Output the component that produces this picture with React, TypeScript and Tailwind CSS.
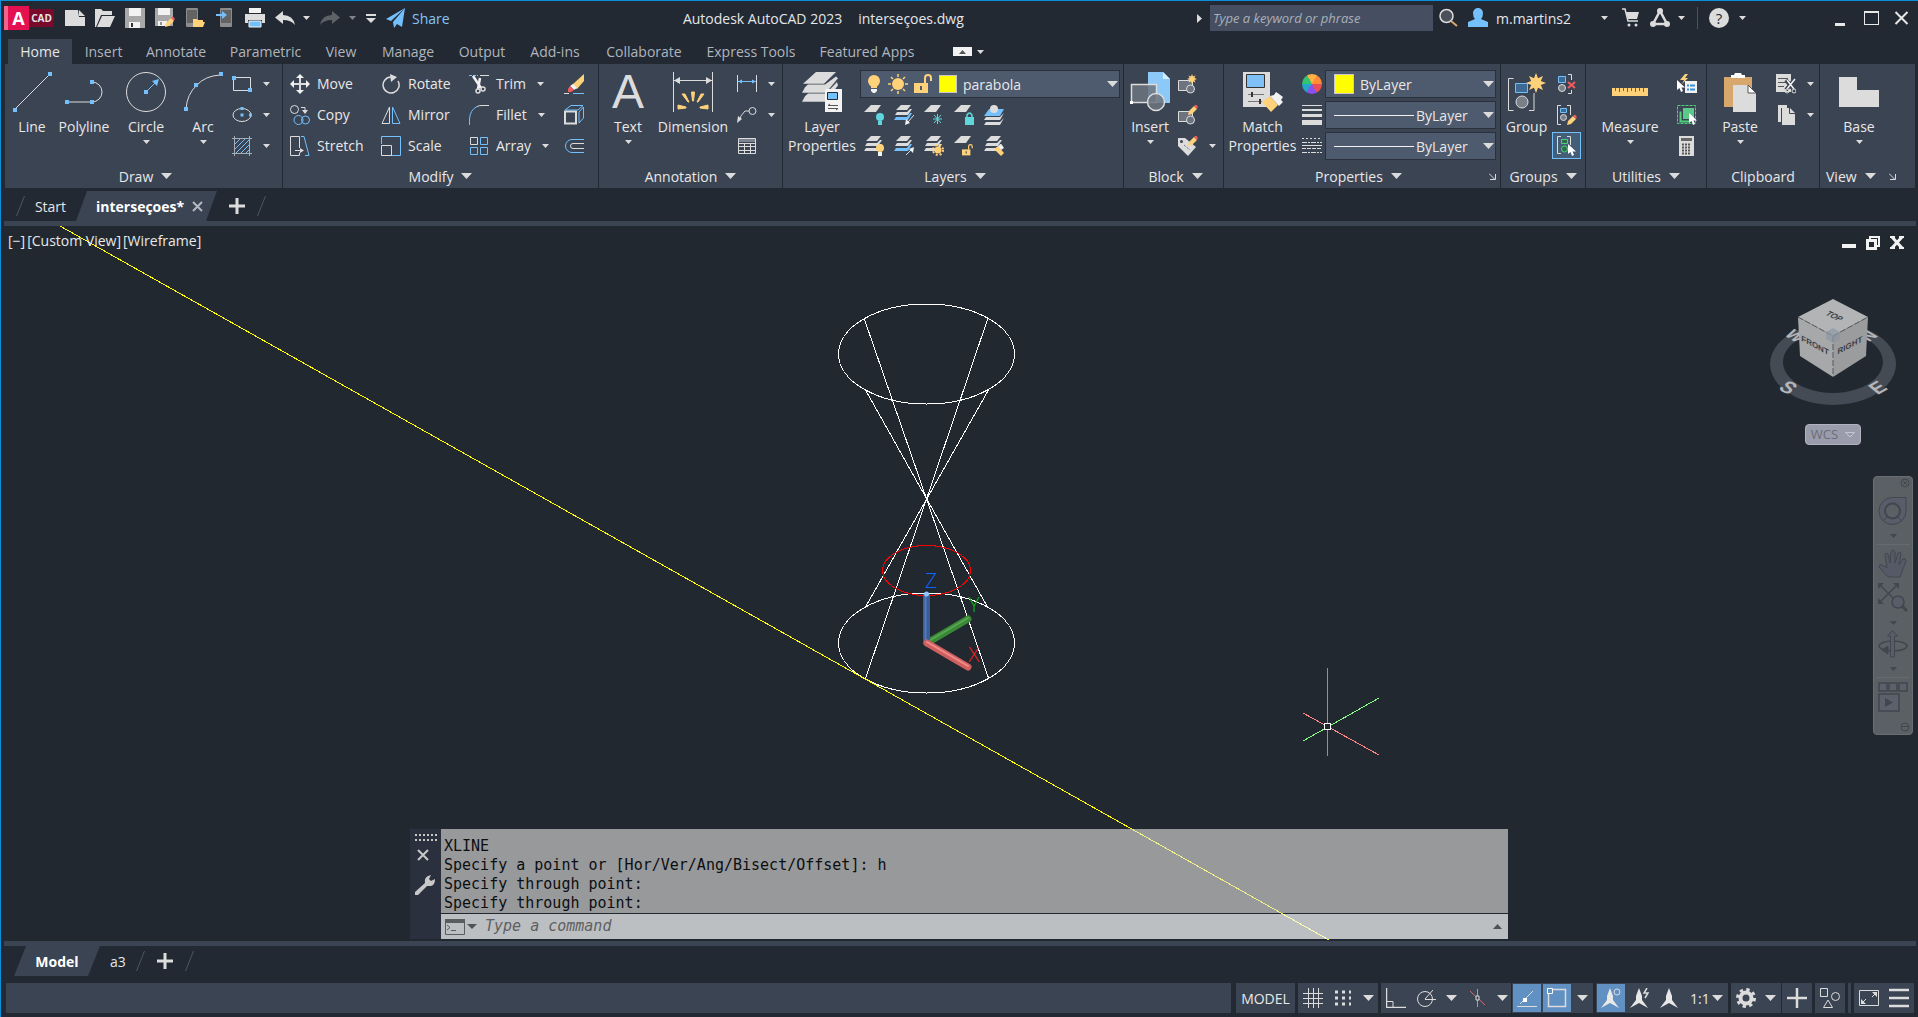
import type { ReactNode } from 'react';

const W = '#dcdcdc';
const B = '#74c0fc';
const Y = '#ffd27a';
const T = '#5fd6dc';

type IconProps = { size?: number; children: ReactNode };

function Icon({ size = 20, children }: IconProps) {
  return (
    <svg width={size} height={size} viewBox={`0 0 ${size} ${size}`} fill="none" stroke={W} className="shrink-0" aria-hidden="true">
      {children}
    </svg>
  );
}

function Caret({ big = false }: { big?: boolean }) {
  return big ? (
    <svg width="11" height="6" viewBox="0 0 11 6" className="shrink-0" aria-hidden="true"><path d="M0 0h11L5.500 6z" fill={W} /></svg>
  ) : (
    <svg width="7" height="4" viewBox="0 0 7 4" className="shrink-0" aria-hidden="true"><path d="M0 0h7L3.500 4z" fill={W} /></svg>
  );
}

function Dot({ x, y }: { x: number; y: number }) {
  return <rect x={x - 2} y={y - 2} width="4" height="4" fill={B} stroke="none" />;
}

function Launcher() {
  return <svg width="7" height="7" viewBox="0 0 7 7" fill="none" stroke={W} aria-hidden="true"><path d="M0 .5l5.500 5.500M6.500 1v5.500H1" /></svg>;
}

/* ---------- shared shapes ---------- */

function Stack({ bottom = W }: { bottom?: string }) {
  return (
    <g stroke="none">
      <path d="M7 0h10l-4 5H2z" fill={W} />
      <path d="M3 7h10l3-3h2l-4 6H1z" fill={W} />
      <path d="M2 12h11l3-4h2l-4 7H0z" fill={bottom} />
    </g>
  );
}

function Sheet() {
  return <path d="M7 0h10l-5 7H0z" fill={W} stroke="none" />;
}

function Pencil({ x = 0, y = 0 }: { x?: number; y?: number }) {
  return (
    <g transform={`translate(${x} ${y})`} stroke="none">
      <path d="M0 10l1-4 5-5 3 3-5 5z" fill={Y} />
      <path d="M6 1l1-1q1-.6 2 .4t.6 2L9 4z" fill="#f25c5c" />
    </g>
  );
}

function Bracket({ d }: { d: string }) {
  return <path d={d} stroke={W} />;
}

function Pointer({ x, y }: { x: number; y: number }) {
  return <path transform={`translate(${x} ${y})`} d="M0 0v10l2.500-2 1.500 4 2-1-1.500-3.500H8z" fill="#fff" stroke="none" />;
}

function Star({ x, y, r }: { x: number; y: number; r: number }) {
  return (
    <path
      transform={`translate(${x} ${y}) scale(${r / 10})`}
      d="M0-10l2 5.200L7-7 4.800-2 10 0 4.800 2 7 7 2 4.800 0 10-2 4.800-7 7-4.800 2-10 0-4.800-2-7-7-2-4.800z"
      fill={Y}
      stroke="none"
    />
  );
}

function OpenLock({ x = 0, y = 0, s = 1 }: { x?: number; y?: number; s?: number }) {
  return (
    <g transform={`translate(${x} ${y}) scale(${s})`}>
      <rect x="0" y="9" width="14" height="10" fill={Y} stroke="none" />
      <path d="M11 9V4q0-3 3-3t3 3v3" stroke={Y} strokeWidth="2" />
      <path d="M7 12v4" stroke="#4e5a6d" strokeWidth="2" />
    </g>
  );
}

/* ---------- ribbon building blocks ---------- */

type PanelProps = { title: string; width: string; arrow?: boolean; launcher?: boolean; children: ReactNode };

function Panel({ title, width, arrow = true, launcher, children }: PanelProps) {
  return (
    <section className={`flex flex-col border-r border-[#222933] pt-1 ${width}`}>
      <div className="flex h-24">{children}</div>
      <div className="flex h-6 items-center px-1">
        <button className="flex flex-1 items-center justify-center gap-2">
          {title}
          {arrow && <Caret big />}
        </button>
        {launcher && <button aria-label={`${title} settings`}><Launcher /></button>}
      </div>
    </section>
  );
}

type BigProps = { label: string; second?: string; width: string; arrow?: boolean; children: ReactNode };

function BigButton({ label, second, width, arrow, children }: BigProps) {
  return (
    <button className={`flex flex-col items-center justify-start pt-1 leading-[19px] ${width}`}>
      <span className="mb-[5px] flex h-10 items-center justify-center">{children}</span>
      {label}
      {second && <span>{second}</span>}
      {arrow && <span className="mt-1 flex"><Caret /></span>}
    </button>
  );
}

function SmallButton({ label, text, arrow, children }: { label: string; text?: boolean; arrow?: boolean; children: ReactNode }) {
  return (
    <button className="flex h-[31px] items-center gap-[7px]" aria-label={label}>
      {children}
      {text && <span>{label}</span>}
      {arrow && <span className="ml-1"><Caret /></span>}
    </button>
  );
}

/* ---------- title bar ---------- */

function TitleBar() {
  return (
    <header className="flex h-[38px] items-center justify-between pb-1 text-[#e4e6e8]">
      <div className="flex items-center">
        <button className="ml-[3px] flex items-center" aria-label="Application menu">
          <span className="flex h-6 w-[25px] items-center justify-center bg-[#e51050] pl-1 text-lg font-bold text-white [box-shadow:inset_4px_0_#f0648a]">A</span>
          <span className="flex h-[18px] w-[25px] items-center justify-center bg-[#7a0a2c] text-[10px] font-bold">CAD</span>
        </button>
        <div className="ml-[11px] flex items-center gap-[10px]">
          <button aria-label="New"><Icon><path d="M0 2h13l1 7h6v9H0z" fill={W} stroke="none" /><path d="M14 2l6 6h-6z" fill={W} stroke="none" /></Icon></button>
          <button aria-label="Open"><Icon><path d="M0 1h6l2 2h9v4H6L1 19H0z" fill={W} stroke="none" /><path d="M7 8h13l-5 11H2z" fill={W} stroke="none" /></Icon></button>
          <button aria-label="Save">
            <Icon><path d="M0 0h20v20H0z" fill="#a8a8a8" stroke="none" /><path d="M4 0h12v8H4zM4 14h11v6H4z" fill="#f2f2f2" stroke="none" /><path d="M7 15v4" stroke="#333" strokeWidth="2" /></Icon>
          </button>
          <button aria-label="Save as">
            <Icon><path d="M0 0h18v18H0z" fill="#a8a8a8" stroke="none" /><path d="M3 0h12v7H3zM3 13h9v5H3z" fill="#f2f2f2" stroke="none" /><path d="M6 14v3" stroke="#333" /><Pencil x={10} y={9} /></Icon>
          </button>
          <button aria-label="Open from web and mobile">
            <Icon><rect x="1" width="12" height="19" rx="1" fill="#8c8c8c" stroke="none" /><path d="M2 2h10v13H2z" fill="#636363" stroke="none" /><path d="M8 11h4l1 1h5v2h2l-2 5H8z" fill={Y} stroke="none" /></Icon>
          </button>
          <button aria-label="Save to web and mobile">
            <Icon><rect x="5" width="12" height="19" rx="1" fill="#8c8c8c" stroke="none" /><path d="M6 2h10v13H6z" fill="#636363" stroke="none" /><path d="M1 6h6V3l5 4-5 4V8H1z" fill={B} stroke="none" /></Icon>
          </button>
          <button aria-label="Plot">
            <Icon><path d="M4 0h12v5H4z" fill="#f2f2f2" stroke="none" /><path d="M0 6h20v9h-3v-3H3v3H0z" fill={W} stroke="none" /><path d="M4 13h12v6H4z" fill={B} stroke="#f2f2f2" /></Icon>
          </button>
          <button className="flex items-center gap-2" aria-label="Undo">
            <Icon><path d="M8 3v4q10 0 12 10-4-5-12-5v4L0 9.500z" fill={W} stroke="none" /></Icon><Caret />
          </button>
          <button className="flex items-center gap-[9px] opacity-50" aria-label="Redo">
            <Icon><path d="M12 3v4Q2 7 0 17q4-5 12-5v4l8-6.500z" fill="#9a9a9a" stroke="none" /></Icon><Caret />
          </button>
          <button className="flex flex-col items-center gap-[2px]" aria-label="Customize toolbar">
            <span className="h-[2px] w-[10px] bg-[#dcdcdc]" /><svg width="10" height="5" viewBox="0 0 10 5" aria-hidden="true"><path d="M0 0h10L5 5z" fill={W} /></svg>
          </button>
          <button className="flex items-center gap-[6px] text-[#86c4f4]">
            <Icon><path d="M19 0L0 11l5 2zM19 0L7 14l1 6 3-4 5 3z" fill={B} stroke="none" /></Icon>Share
          </button>
        </div>
      </div>
      <h1 className="flex gap-4"><span>Autodesk AutoCAD 2023</span><span>interseçoes.dwg</span></h1>
      <div className="flex items-center">
        <button aria-label="Collapse search"><svg width="5" height="9" viewBox="0 0 5 9" aria-hidden="true"><path d="M0 0v9l5-4.500z" fill={W} /></svg></button>
        <input aria-label="Search help" placeholder="Type a keyword or phrase" className="ml-2 h-[26px] w-[223px] bg-[#464f61] px-[3px] text-[13px] italic placeholder:text-[#a9afba]" />
        <button className="ml-[6px]" aria-label="Search"><Icon><circle cx="7.500" cy="8" r="6.500" fill="#4b515a" strokeWidth="1.500" /><path d="M12 13l6 5" stroke="#d8a76b" strokeWidth="2" /></Icon></button>
        <button className="ml-[9px] flex items-center gap-2">
          <Icon><path d="M5 5a5 5 0 0 1 10 0q0 4-2 6l7 3v5H0v-5l7-3Q5 9 5 5z" fill={B} stroke="none" /></Icon>
          <span className="w-[97px] text-left">m.martins2</span>
          <Caret />
        </button>
        <button className="ml-[14px]" aria-label="App store"><Icon><path d="M0 1h3l3 12h10" strokeWidth="1.500" /><path d="M4 4h13l-2 7H6z" fill={W} stroke="none" /><circle cx="7" cy="17" r="1.500" fill={W} stroke="none" /><circle cx="14" cy="17" r="1.500" fill={W} stroke="none" /></Icon></button>
        <button className="ml-2 flex items-center gap-2" aria-label="Autodesk app">
          <Icon><path d="M10 3L3 16h14z" strokeWidth="2.500" /><circle cx="10" cy="3" r="3" fill={W} stroke="none" /><circle cx="3" cy="16" r="3" fill={W} stroke="none" /><circle cx="17" cy="16" r="3" fill={W} stroke="none" /></Icon><Caret />
        </button>
        <span className="ml-3 h-[22px] w-px bg-[#4a5261]" />
        <button className="ml-[11px] flex items-center gap-[10px]" aria-label="Help">
          <span className="flex h-5 w-5 items-center justify-center rounded-full bg-[#dcdcdc] text-[15px] text-[#222933]">?</span><Caret />
        </button>
        <div className="ml-[89px] flex items-center gap-[15px] pr-[9px]">
          <button className="flex h-4 w-[14px] items-end" aria-label="Minimize"><span className="h-[3px] w-[10px] bg-[#e8e8e8]" /></button>
          <button className="h-[14px] w-[15px] border border-[#e8e8e8] border-t-2" aria-label="Maximize" />
          <button aria-label="Close"><svg width="15" height="14" viewBox="0 0 15 14" stroke="#e8e8e8" strokeWidth="2" aria-hidden="true"><path d="M1.500 1l12 12M13.500 1l-12 12" /></svg></button>
        </div>
      </div>
    </header>
  );
}

const ribbonTabs = [
  { name: 'Insert', width: 'w-[61px]' },
  { name: 'Annotate', width: 'w-[84px]' },
  { name: 'Parametric', width: 'w-[95px]' },
  { name: 'View', width: 'w-[56px]' },
  { name: 'Manage', width: 'w-[78px]' },
  { name: 'Output', width: 'w-[70px]' },
  { name: 'Add-ins', width: 'w-[76px]' },
  { name: 'Collaborate', width: 'w-[102px]' },
  { name: 'Express Tools', width: 'w-[112px]' },
  { name: 'Featured Apps', width: 'w-[120px]' },
];

function RibbonTabs() {
  return (
    <nav className="flex h-[25px] items-center pl-[7px] text-[#b0b5bd]">
      <button className="mr-px h-full w-16 bg-[#3b4453] text-[#e4e6e8]">Home</button>
      {ribbonTabs.map((tab) => (
        <button key={tab.name} className={tab.width}>{tab.name}</button>
      ))}
      <button className="ml-[26px] flex items-center gap-[5px]" aria-label="Minimize ribbon">
        <span className="flex h-[9px] w-[19px] items-center justify-center bg-[#f2f2f2]">
          <svg width="7" height="4" viewBox="0 0 7 4" aria-hidden="true"><path d="M0 4h7L3.500 0z" fill="#555" /></svg>
        </span>
        <Caret />
      </button>
    </nav>
  );
}

/* ---------- ribbon panels ---------- */

function DrawPanel() {
  return (
    <Panel title="Draw" width="w-[278px] pl-1">
      <BigButton label="Line" width="w-[46px]">
        <Icon size={40}><path d="M3 37L37 3" /><Dot x={3} y={38} /><Dot x={38} y={2} /></Icon>
      </BigButton>
      <BigButton label="Polyline" width="w-[58px]">
        <Icon size={40}><path d="M2 30h26a10 10 0 0 0 0-20" /><Dot x={3} y={30} /><Dot x={28} y={30} /><Dot x={28} y={10} /></Icon>
      </BigButton>
      <BigButton label="Circle" width="w-[66px]" arrow>
        <Icon size={40}><circle cx="20" cy="20" r="19.500" /><path d="M20 20l9-9" stroke={B} /><path d="M33 7l-2 7-5-5z" fill={B} stroke="none" /><Dot x={20} y={20} /></Icon>
      </BigButton>
      <BigButton label="Arc" width="w-[48px]" arrow>
        <Icon size={40}><path d="M3 37Q4 22 14 13 22 4 37 3" /><Dot x={3} y={37} /><Dot x={13} y={13} /><Dot x={38} y={2} /></Icon>
      </BigButton>
      <div className="ml-[5px] flex flex-col">
        <SmallButton label="Rectangle" arrow><Icon><path d="M1.500 3.500h17v13h-17z" /><Dot x={2} y={4} /><Dot x={18} y={16} /></Icon></SmallButton>
        <SmallButton label="Ellipse" arrow><Icon><ellipse cx="10" cy="10" rx="9" ry="6.500" /><rect x="8.500" y="2" width="3" height="3" fill={B} stroke="none" /><rect x="8.500" y="8.500" width="3" height="3" fill={B} stroke="none" /><rect x="17" y="8.500" width="3" height="3" fill={B} stroke="none" /></Icon></SmallButton>
        <SmallButton label="Hatch" arrow>
          <Icon><path d="M0 2.500h20M0 17.500h20M2.500 0v20M17.500 0v20" stroke="#a8adb5" /><path d="M3 8l5-5M3 13L13 3M4 17L17 4M9 17l8-8M14 17l3-3" stroke={B} /></Icon>
        </SmallButton>
      </div>
    </Panel>
  );
}

function ModifyPanel() {
  return (
    <Panel title="Modify" width="w-[316px]">
      <div className="ml-[7px] flex w-[91px] flex-col">
        <SmallButton label="Move" text><Icon><path d="M10 1v18M1 10h18" strokeWidth="2" /><path d="M10 0l4 4H6zM10 20l4-4H6zM0 10l4-4v8zM20 10l-4-4v8z" fill="#f2f2f2" stroke="none" /></Icon></SmallButton>
        <SmallButton label="Copy" text><Icon><circle cx="4.500" cy="4.500" r="4" /><circle cx="8.500" cy="15" r="4.500" stroke={B} /><circle cx="15.500" cy="15" r="4" stroke={B} /><path d="M11 2.500h4V6" /><path d="M12 5h6l-3 4z" fill={W} stroke="none" /></Icon></SmallButton>
        <SmallButton label="Stretch" text><Icon><path d="M9.500 12V.5h-9v19h9v-3" /><path d="M11 .5h3l5 19h-4" stroke={B} /><path d="M5 14.500h6" /><path d="M10 12l4 2.500-4 2.500z" fill={W} stroke="none" /></Icon></SmallButton>
      </div>
      <div className="flex w-[88px] flex-col">
        <SmallButton label="Rotate" text><Icon><path d="M10 3a8 8 0 1 0 7 4" strokeWidth="1.500" /><path d="M9 0l7 3-6 5z" fill={W} stroke="none" /></Icon></SmallButton>
        <SmallButton label="Mirror" text><Icon><path d="M8.500 2v16.500H1z" /><path d="M11.500 2v16.500H19z" stroke={B} /></Icon></SmallButton>
        <SmallButton label="Scale" text><Icon><path d="M.5 8V.5h19v19H10" stroke={B} /><path d="M.5 9.500h10v10H.5z" /></Icon></SmallButton>
      </div>
      <div className="flex w-[95px] flex-col">
        <SmallButton label="Trim" text arrow><Icon><path d="M0 1.500h9" stroke={B} strokeDasharray="3 1" /><path d="M11 1.500h9" /><path d="M4 2l8 12M11 4l-2 11" strokeWidth="2.500" stroke="#f2f2f2" /><circle cx="9" cy="17" r="2" strokeWidth="1.500" /><circle cx="14" cy="15" r="2" strokeWidth="1.500" /></Icon></SmallButton>
        <SmallButton label="Fillet" text arrow><Icon><path d="M.5 20v-6Q1 5 8 1.500" stroke={B} /><path d="M8 1.500Q10 .5 13 .5h7" /></Icon></SmallButton>
        <SmallButton label="Array" text arrow><Icon><path d="M1.500 1.500h7v7h-7z" /><path d="M11.500 1.500h7v7h-7zM1.500 11.500h7v7h-7zM11.500 11.500h7v7h-7z" stroke={B} /></Icon></SmallButton>
      </div>
      <div className="flex flex-col">
        <SmallButton label="Erase"><Icon><path d="M20 0v7l-7 8-5-4z" fill={Y} stroke="none" /><path d="M9 10l4 4-3 2-4-4z" fill="#f2f2f2" stroke="none" /><path d="M6 12l4 4-3 2H4v-3z" fill="#f25c5c" stroke="none" /><path d="M0 19.500h5" /><path d="M9 19.500h11" stroke={B} /></Icon></SmallButton>
        <SmallButton label="Explode"><Icon><path d="M1 6.500h11v12H1z" strokeWidth="2" /><path d="M1 5l6-4.500h12L14 5zM15 7l4.500-5v11L15 18z" stroke={B} /></Icon></SmallButton>
        <SmallButton label="Offset"><Icon><path d="M20 3.500H8a6.500 6.500 0 0 0 0 13h12" stroke={B} /><path d="M20 7.500H9a2.500 2.500 0 0 0 0 5h11" /></Icon></SmallButton>
      </div>
    </Panel>
  );
}

function AnnotationPanel() {
  return (
    <Panel title="Annotation" width="w-[184px]">
      <div className="ml-1 flex">
        <BigButton label="Text" width="w-[50px]" arrow><span className="font-['Liberation_Sans',sans-serif] text-5xl leading-10 text-[#dcdcdc]">A</span></BigButton>
      </div>
      <BigButton label="Dimension" width="w-[80px]">
        <Icon size={40}>
          <path d="M.5 0v40M39.500 0v40M1 8.500h38" />
          <path d="M1 8.500l6-3.500v7zM39 8.500L33 5v7z" fill={W} stroke="none" />
          <path d="M18.500 20h3l-1 9h-1zM9 22l3 0 4 8-1 0zM31 22l-3 0-4 8 1 0zM5 33l8 2v1l-8 1zM35 33l-8 2v1l8 1z" fill={Y} stroke={Y} />
        </Icon>
      </BigButton>
      <div className="ml-1 flex flex-col">
        <SmallButton label="Linear" arrow><Icon><path d="M.5 1v17M19.500 1v17" /><path d="M1 7.500h18" stroke={B} /><path d="M1 7.500l4-2v4zM19 7.500l-4-2v4z" fill={B} stroke="none" /></Icon></SmallButton>
        <SmallButton label="Leader" arrow><Icon><circle cx="15.500" cy="6" r="3.500" /><path d="M12 6H8q-4 4-6 9" /><path d="M0 18l1-7 4 3z" fill={W} stroke="none" /></Icon></SmallButton>
        <SmallButton label="Table"><Icon><path d="M1.500 2.500h17v15h-17zM1 7.500h18M1 10.500h18M1 14.500h18M7.500 7v10M13.500 7v10" /><path d="M2 3h16v3H2z" fill="#7c838e" stroke="none" /></Icon></SmallButton>
      </div>
    </Panel>
  );
}

const comboBox = 'flex h-7 items-center border border-[#2a313d] bg-[#4e5a6d]';

function LayersPanel() {
  return (
    <Panel title="Layers" width="w-[341px] pl-1">
      <BigButton label="Layer" second="Properties" width="w-[70px]">
        <Icon size={40}>
          <path d="M14 0h20L22 13H1zM3 17l3-3h17L34 5l2 2-12 16H0zM3 27l3-3h18L35 11l1 4-13 18H0z" transform="scale(1 .9)" fill={W} stroke="none" />
          <path d="M23 17h17v23H23z" fill="#f2f2f2" stroke="none" />
          <path d="M25.500 20.500h10v7h-10z" fill={B} stroke="#222933" />
          <path d="M26 33.500h10M26 36.500h10M28 32l-2 1.500M34 38l2-1.500" stroke="#555" />
        </Icon>
      </BigButton>
      <div className="ml-[3px] flex flex-col">
        <div className={`mt-[2px] mb-px w-[260px] gap-1 pr-px pl-[3px] ${comboBox}`}>
          <Icon><circle cx="10" cy="7" r="6" fill={Y} stroke="none" /><path d="M7 11h6v3H7z" fill={Y} stroke="none" /><path d="M7 15h6v2l-2 2H9l-2-2z" fill="#f2f2f2" stroke="none" /></Icon>
          <Icon><circle cx="10" cy="10" r="6" fill={Y} stroke="none" /><path d="M10 0v3M10 17v3M0 10h3M17 10h3M3 3l2 2M15 15l2 2M17 3l-2 2M5 15l-2 2" stroke={Y} strokeWidth="1.500" /></Icon>
          <Icon><OpenLock x={2} /></Icon>
          <span className="ml-[3px] h-[18px] w-[18px] shrink-0 border border-[#c8c8c8] bg-[#ffff00]" />
          <select aria-label="Current layer" className="ml-[2px] flex-1 appearance-none bg-transparent"><option>parabola</option></select>
          <Caret big />
        </div>
        <div className="grid grid-cols-[repeat(5,30px)] pl-1">
          <SmallButton label="Off"><Icon><Sheet /><circle cx="16" cy="12" r="4" fill={T} stroke="none" /><path d="M14 16h4v4h-4z" fill={T} stroke="none" /></Icon></SmallButton>
          <SmallButton label="Isolate"><Icon><Stack bottom={B} /><path d="M20 10l-6 7" /><path d="M11 20l1-6 4 4z" fill="#f2f2f2" stroke="none" /></Icon></SmallButton>
          <SmallButton label="Freeze"><Icon><Sheet /><path d="M13.500 9v10M9 14h9M10 10l7 8M17 10l-7 8" stroke={T} /></Icon></SmallButton>
          <SmallButton label="Lock"><Icon><Sheet /><path d="M11 12h9v8h-9z" fill={T} stroke="none" /><path d="M13 12v-2q2.500-4 5 0v2" stroke={T} strokeWidth="1.500" /></Icon></SmallButton>
          <SmallButton label="Make current"><Icon><path d="M5 4h15l-4 7H0z" fill={B} stroke="none" /><circle cx="10" cy="4" r="4" fill={W} stroke="none" /><path d="M2 12h14l4-4-4 7H0zM2 17h14l4-4-4 7H0z" fill={W} stroke="none" /></Icon></SmallButton>
          <SmallButton label="Turn all on"><Icon><Stack /><circle cx="16" cy="12" r="4" fill={Y} stroke="none" /><path d="M14 16h4v4h-4z" fill="#f2f2f2" stroke="none" /></Icon></SmallButton>
          <SmallButton label="Unisolate"><Icon><Stack bottom={B} /><path d="M12 19l6-6" /><path d="M20 11l-1 6-4-4z" fill="#f2f2f2" stroke="none" /></Icon></SmallButton>
          <SmallButton label="Thaw"><Icon><Stack /><circle cx="14" cy="14" r="3.500" fill={Y} stroke="none" /><circle cx="14" cy="14" r="5" stroke={Y} strokeWidth="2" strokeDasharray="2 2" /></Icon></SmallButton>
          <SmallButton label="Unlock"><Icon><Sheet /><OpenLock x={8} y={8} s={0.6} /></Icon></SmallButton>
          <SmallButton label="Match layer"><Icon><Stack /><path d="M10 13l4-3 6 7-3 3z" fill={Y} stroke="none" /><path d="M14 10l4-1 2 3-3 2z" fill="#f2f2f2" stroke="none" /></Icon></SmallButton>
        </div>
      </div>
    </Panel>
  );
}

function BlockGlyph() {
  return (
    <>
      <path d="M.5 6.500h14v10H.5z" fill="#6d7480" />
      <circle cx="12.500" cy="15" r="4" fill="#6d7480" />
    </>
  );
}

function BlockPanel() {
  return (
    <Panel title="Block" width="w-[100px] pl-1">
      <BigButton label="Insert" width="w-[44px]" arrow>
        <Icon size={40}>
          <path d="M18 0h15l7 7v24H18z" fill="#8cc8f8" stroke="none" /><path d="M33 0l7 7h-7z" fill="#d6ecfd" stroke="none" />
          <path d="M1.500 12.500h25v18h-25z" fill="#6d7480" fillOpacity=".85" strokeWidth="1.500" /><circle cx="26" cy="30" r="8.500" fill="#6d7480" fillOpacity=".85" strokeWidth="1.500" />
          <path d="M0 29h3v3H0z" fill="#fff" stroke="none" />
        </Icon>
      </BigButton>
      <div className="ml-[6px] flex flex-col">
        <SmallButton label="Create block"><Icon><BlockGlyph /><Star x={14} y={5} r={5} /></Icon></SmallButton>
        <SmallButton label="Edit block"><Icon><BlockGlyph /><Pencil x={10} y={0} /></Icon></SmallButton>
        <SmallButton label="Edit attributes" arrow><Icon><path d="M0 2h7l11 9-8 9L0 10z" fill={W} stroke="none" /><path d="M6 9l6 5" stroke="#555" strokeDasharray="1 1" /><circle cx="3.500" cy="5.500" r="1.500" fill="#3b4453" stroke="none" /><Pencil x={10} y={0} /></Icon></SmallButton>
      </div>
    </Panel>
  );
}

function PropertiesPanel() {
  return (
    <Panel title="Properties" width="w-[277px]" launcher>
      <BigButton label="Match" second="Properties" width="w-[77px]">
        <Icon size={40}>
          <path d="M0 0h27v35H0z" fill={W} stroke="none" />
          <path d="M3.500 2.500h18v13h-18z" fill="#7fc1f7" stroke="#333" />
          <path d="M5 22.500h16M5 29.500h14" stroke="#777" /><path d="M9 20v5M17 27v5" stroke="#333" strokeWidth="2" />
          <path d="M19 30l8-6 8 9-7 7z" fill={Y} stroke="none" /><path d="M27 24l4-1 2-3 3 2 4 3-2 3 2 2-4 4z" fill="#f2f2f2" stroke="none" />
        </Icon>
      </BigButton>
      <div className="ml-px flex w-[23px] flex-col">
        <SmallButton label="Color"><span className="h-5 w-5 rounded-full bg-[conic-gradient(#ffb144_0_8%,#ff8d38_0_25%,#e94e58_0_42%,#8a50f0_0_60%,#22a7c8_0_75%,#34c470_0_92%,#ffb144_0)]" /></SmallButton>
        <SmallButton label="Lineweight"><Icon><path d="M0 .5h20" /><path d="M0 5h20" strokeWidth="2" /><path d="M0 10.500h20" strokeWidth="3" /><path d="M0 17.500h20" strokeWidth="5" /></Icon></SmallButton>
        <SmallButton label="Linetype"><Icon><path d="M0 2.500h20" strokeDasharray="2 2" /><path d="M0 6.500h20M0 16.500h20" strokeDasharray="5 1 2 1" /><path d="M0 9.500h20" /><path d="M0 12.500h20" strokeDasharray="4 1" /></Icon></SmallButton>
      </div>
      <div className="flex flex-col gap-[3px] pt-[2px]">
        <div className={`w-[171px] pr-px pl-2 ${comboBox}`}>
          <span className="h-5 w-5 shrink-0 border border-[#c8c8c8] bg-[#ffff00]" />
          <select aria-label="Object color" className="ml-[6px] min-w-0 flex-1 appearance-none bg-transparent"><option>ByLayer</option></select>
          <Caret big />
        </div>
        {['Object lineweight', 'Object linetype'].map((name) => (
          <div key={name} className={`w-[171px] pr-px pl-2 ${comboBox}`}>
            <span className="h-px w-20 shrink-0 bg-[#f2f2f2]" />
            <select aria-label={name} className="ml-[2px] min-w-0 flex-1 appearance-none bg-transparent"><option>ByLayer</option></select>
            <Caret big />
          </div>
        ))}
      </div>
    </Panel>
  );
}

function GroupsPanel() {
  return (
    <Panel title="Groups" width="w-[85px]">
      <BigButton label="Group" width="w-[51px]">
        <Icon size={40}>
          <Bracket d="M6.500 6.500h-5v32h5M22 38.500h5V21" /><path d="M8.500 11.500h12v9h-12z" fill="#3d6a94" stroke={B} />
          <circle cx="15" cy="30" r="6" fill="#7a808a" /><Star x={29} y={11} r={10} />
        </Icon>
      </BigButton>
      <div className="flex flex-col items-center">
        <SmallButton label="Ungroup"><Icon><path d="M1.500 2.500h7v6h-7z" fill="#3d6a94" stroke={B} /><circle cx="5" cy="14" r="3.500" fill="#7a808a" /><path d="M11 .5h3.500V6M14.500 16v3.500H11" /><path d="M11 8l7 6M18 8l-7 6" stroke="#f25c5c" strokeWidth="2" /></Icon></SmallButton>
        <SmallButton label="Group edit"><Icon><Bracket d="M4 .5H.5v19H4M10 .5h3.500V10" /><path d="M3.500 3.500h6v4h-6z" fill="#3d6a94" stroke={B} /><circle cx="6.500" cy="12.500" r="3" fill="#7a808a" /><Pencil x={10} y={10} /></Icon></SmallButton>
        <button aria-label="Group selection" aria-pressed="true" className="mt-[2px] flex h-[27px] w-[29px] items-center justify-center border border-[#74c0fc] bg-[#455e78]">
          <Icon><Bracket d="M4 .5H.5v17H4M10 .5h3.500V9" /><path d="M4.500 3.500h6v4h-6z" stroke="#4fd07a" fill="#2f6b4d" /><circle cx="7.500" cy="13" r="3" stroke="#4fd07a" fill="#2f6b4d" /><Pointer x={11} y={8} /></Icon>
        </button>
      </div>
    </Panel>
  );
}

function UtilitiesPanel() {
  return (
    <Panel title="Utilities" width="w-[121px]">
      <BigButton label="Measure" width="w-[88px]" arrow>
        <Icon size={40}><path d="M2 16h36v8H2z" fill={Y} stroke="none" /><path d="M5.500 16v3M9.500 16v4M13.500 16v3M17.500 16v4M21.500 16v3M25.500 16v4M29.500 16v3M33.500 16v4" stroke="#7a6335" /></Icon>
      </BigButton>
      <div className="ml-[3px] flex flex-col">
        <SmallButton label="Quick select"><Icon><path d="M8 7h12v12H8z" fill="#f2f2f2" stroke="none" /><path d="M10 11.500h2M10 15.500h2M13 11.500h5M13 15.500h5" stroke="#3a8fd6" strokeWidth="2" /><path d="M8 0L3 6h4L5 10l6-6H8l3-4z" fill={Y} stroke="none" /><Pointer x={0} y={6} /></Icon></SmallButton>
        <SmallButton label="Select all"><Icon><path d="M.5.5h18v18H.5z" stroke="#4fd07a" strokeDasharray="3 1" /><path d="M6 3h11v11H6z" fill="#5cc98a" stroke="none" /><path d="M3.500 6.500v10h9" stroke="#4fd07a" strokeWidth="2" /><Pointer x={12} y={8} /></Icon></SmallButton>
        <SmallButton label="Quick calculator"><Icon><path d="M2 0h15v20H2z" fill={W} stroke="none" /><path d="M4 2h11v3H4z" fill="#666" stroke="none" /><path d="M5 8.500h9M5 11.500h9M5 14.500h9M5 17.500h9" stroke="#555" strokeWidth="2" strokeDasharray="2 1" /></Icon></SmallButton>
      </div>
    </Panel>
  );
}

function ClipboardPanel() {
  return (
    <Panel title="Clipboard" width="w-[113px]" arrow={false}>
      <BigButton label="Paste" width="w-[66px]" arrow>
        <Icon size={40}>
          <path d="M4 5h28v30H4z" fill="#d8a76b" stroke="none" /><path d="M11 6V3h3l1-2h6l1 2h3v3z" fill="#fff" stroke="none" />
          <path d="M13 13h15l8 8v19H13z" fill={W} stroke="none" /><path d="M28 13v8h8z" fill="#fff" stroke="#555" />
        </Icon>
      </BigButton>
      <div className="ml-[3px] flex flex-col">
        <SmallButton label="Cut" arrow><Icon><path d="M0 0h15v18H0z" fill={W} stroke="none" /><path d="M2 4.500h10M2 8.500h8M2 12.500h6" stroke="#555" /><path d="M18 6L10 16M10 6l8 10" stroke="#3b4453" strokeWidth="4" /><path d="M19 5l-8 10M11 6l7 9" stroke="#f2f2f2" strokeWidth="1.500" /><circle cx="11" cy="17" r="2" /><circle cx="18" cy="17" r="2" /></Icon></SmallButton>
        <SmallButton label="Copy clip" arrow><Icon><path d="M2 0h9v3H5v14H2z" fill={W} stroke="none" /><path d="M6 3h8l5 5v12H6z" fill={W} stroke="none" /><path d="M13.500 3v5.500H19" stroke="#3b4453" /></Icon></SmallButton>
      </div>
    </Panel>
  );
}

function Ribbon() {
  return (
    <div className="mr-[3px] ml-1 flex h-[124px] bg-[#3b4453] text-[#e8e8e8]">
      <DrawPanel />
      <ModifyPanel />
      <AnnotationPanel />
      <LayersPanel />
      <BlockPanel />
      <PropertiesPanel />
      <GroupsPanel />
      <UtilitiesPanel />
      <ClipboardPanel />
      <section className="flex flex-1 flex-col pt-1">
        <div className="flex h-24">
          <BigButton label="Base" width="w-[78px]" arrow>
            <Icon size={40}><path d="M0 5h18v13h22v17H0z" fill={W} stroke="none" /></Icon>
          </BigButton>
        </div>
        <div className="flex h-6 items-center gap-[13px] pl-[6px]">
          <button className="flex items-center gap-2">View<Caret big /></button>
          <button aria-label="View settings"><Launcher /></button>
        </div>
      </section>
    </div>
  );
}

/* ---------- file and layout tabs ---------- */

function Slash() {
  return <svg width="9" height="20" viewBox="0 0 9 20" stroke="#4c5565" aria-hidden="true"><path d="M8.500 0L.5 20" /></svg>;
}

function PlusIcon() {
  return <svg width="16" height="16" viewBox="0 0 16 16" stroke={W} strokeWidth="3" aria-hidden="true"><path d="M8 0v16M0 8h16" /></svg>;
}

function FileTabs() {
  return (
    <nav className="flex h-[33px] items-end pl-[15px] text-[#e4e6e8]">
      <div className="flex h-[30px] items-center">
        <Slash />
        <button className="w-[51px] text-center">Start</button>
        <div className="flex h-[30px] w-[141px] items-center bg-[#3b4453] pl-5 font-bold [clip-path:polygon(11px_0,100%_0,130px_100%,0_100%)]">
          <button className="w-24 text-left text-white">interseçoes*</button>
          <button aria-label="Close drawing"><svg width="11" height="11" viewBox="0 0 11 11" stroke="#b4b9c1" strokeWidth="2" aria-hidden="true"><path d="M1 1l9 9M10 1l-9 9" /></svg></button>
        </div>
        <button className="mx-3" aria-label="New drawing"><PlusIcon /></button>
        <Slash />
      </div>
    </nav>
  );
}

function LayoutTabs() {
  return (
    <nav className="flex h-[37px] items-start pl-[13px] text-[#e4e6e8]">
      <div className="flex h-[30px] items-center">
        <button className="h-[30px] w-[86px] bg-[#3b4453] font-bold text-white [clip-path:polygon(12px_0,100%_0,74px_100%,0_100%)]">Model</button>
        <button className="w-9">a3</button>
        <Slash />
        <button className="mx-3" aria-label="New layout"><PlusIcon /></button>
        <Slash />
      </div>
    </nav>
  );
}

/* ---------- drawing area ---------- */

function Drawing() {
  return (
    <svg className="absolute inset-0 h-full w-full" fill="none" stroke="#fff" shapeRendering="crispEdges" role="img" aria-label="Two cones meeting at the apex">
      <ellipse cx="925.500" cy="128" rx="88" ry="50" />
      <ellipse cx="925.500" cy="417" rx="88" ry="50" />
      <path d="M863.500 93.500L987.500 452M986.500 93.500L864.500 452.500M864.500 164l122 217M987.500 164l-123 217" />
      <ellipse cx="925.500" cy="344.500" rx="44" ry="25" stroke="#ff0000" />
      <path d="M59 0l1269 714" stroke="#ffff00" />

      <g shapeRendering="auto" strokeLinecap="round">
        <path d="M926 417l41-24" stroke="#3a8a35" strokeWidth="7" />
        <path d="M926 416l41-24" stroke="#5aa556" strokeWidth="2" />
        <path d="M925.500 416v-48" stroke="#3a5e9c" strokeWidth="7" strokeLinecap="butt" />
        <path d="M924.500 416v-48" stroke="#5479b4" strokeWidth="2" strokeLinecap="butt" />
        <path d="M926 417l41 24" stroke="#d06060" strokeWidth="7" />
        <path d="M926 416l41 24" stroke="#f08c8c" strokeWidth="2" />
        <circle cx="925.500" cy="368" r="2.500" fill="#8fc6ff" stroke="none" />
      </g>
      <g stroke="none" className="text-[21px] font-light" textAnchor="middle">
        <text x="930" y="362" fill="#0a66ff">Z</text>
        <text x="973" y="386" fill="#10b010">Y</text>
        <text x="973" y="436" fill="#f02020">X</text>
      </g>

      <path d="M1326.500 442v88" stroke="#8484ff" />
      <path d="M1302 487l76 42" stroke="#ff8484" />
      <path d="M1302 515l76-43" stroke="#84ff84" />
      <rect x="1323.500" y="497.500" width="6" height="6" fill="#212830" />
    </svg>
  );
}

function ViewCube() {
  return (
    <svg width="130" height="112" viewBox="0 0 130 112" role="img" aria-label="View cube">
      <path d="M65 26a63 41 0 1 0 .1 0zM65 34a50 31 0 1 1-.1 0z" fill="#454b55" fillRule="evenodd" />
      <g fill="#b4b6b9" className="font-['Liberation_Sans',sans-serif] text-[16px] font-bold" textAnchor="middle">
        <text transform="translate(22 42) rotate(32) skewX(-28)">W</text>
        <text transform="translate(106 42) rotate(-32) skewX(28)">N</text>
        <text transform="translate(15 95) rotate(30) skewX(-20)" className="text-[19px]">S</text>
        <text transform="translate(115 95) rotate(-30) skewX(20)" className="text-[19px]">E</text>
      </g>
      <path d="M65 2l35 18-35 19L30 20z" fill="#b2b4b6" />
      <path d="M30 20l35 19v41L32 59z" fill="#a6a8aa" />
      <path d="M100 20L65 39v41l33-21z" fill="#9a9c9e" />
      <path d="M30 20l35 19 35-19M65 39v41" fill="none" stroke="#54585e" strokeDasharray="6 2" />
      <path d="M58 35l7-4 7 4v7l-7 4-7-4z" fill="#8d97a2" fillOpacity=".7" />
      <g fill="#3d4148" className="font-['Liberation_Sans',sans-serif] text-[8px] font-bold" textAnchor="middle">
        <text transform="translate(64 21) rotate(26) skewX(-26)">TOP</text>
        <text transform="translate(47 51) skewY(28)">FRONT</text>
        <text transform="translate(82 51) skewY(-28)">RIGHT</text>
      </g>
    </svg>
  );
}

function NavBar() {
  return (
    <div className="flex w-10 flex-col items-center rounded-sm border border-[#6a6e72] bg-[#5b6064] text-[#41464f]">
      <button className="mt-px mr-[2px] self-end" aria-label="Close navigation bar">
        <svg width="10" height="10" viewBox="0 0 10 10" fill="none" stroke="currentColor"><circle cx="5" cy="5" r="4" /><path d="M3 3l4 4M7 3L3 7" /></svg>
      </button>
      <button className="mt-[9px] flex flex-col items-center gap-[9px]" aria-label="Steering wheel">
        <svg width="30" height="28" viewBox="0 0 30 28" fill="#585e69" stroke="currentColor"><path d="M14 .5h14V14A13.500 13.500 0 1 1 14 .5z" /><circle cx="14.500" cy="14" r="7.500" fill="#5b6064" strokeWidth="2" /><path d="M9 20l-4 4M20 20l4 4" /></svg>
        <svg width="7" height="4" viewBox="0 0 7 4" fill="currentColor"><path d="M0 0h7L3.500 4z" /></svg>
      </button>
      <span className="mt-[6px] h-px w-[34px] bg-[#666a6e]" />
      <button className="mt-1" aria-label="Pan">
        <svg width="30" height="30" viewBox="0 0 30 30" fill="#555b66" stroke="currentColor"><path d="M10 28L1 18q0-3 3-2l5 3L7 7q0-4 3-2l2 9 1-11q1.500-4 4 0v11l3-10q3-2 3 1l-2 11 4-6q3-1 3 2-2 5-6 16z" /></svg>
      </button>
      <button className="mt-1 flex flex-col items-center gap-[9px]" aria-label="Zoom extents">
        <svg width="30" height="29" viewBox="0 0 30 29" fill="none" stroke="currentColor"><path d="M2 2l17 17M19 2L2 19" strokeWidth="1.500" /><path d="M0 0h6L0 6zM21 0v6l-6-6zM0 21v-6l6 6z" fill="currentColor" stroke="none" /><circle cx="20" cy="19" r="6" fill="#585e69" strokeWidth="1.500" /><path d="M24 23l5 5" strokeWidth="3" /></svg>
        <svg width="7" height="4" viewBox="0 0 7 4" fill="currentColor"><path d="M0 0h7L3.500 4z" /></svg>
      </button>
      <button className="mt-[5px] flex flex-col items-center gap-[9px]" aria-label="Orbit">
        <svg width="30" height="28" viewBox="0 0 30 28" fill="#585e69" stroke="currentColor"><ellipse cx="15" cy="16" rx="14" ry="5" fill="none" strokeWidth="1.500" /><path d="M12.500 27V6H9.500l5-5.500 5 5.500h-3v21z" /><path d="M4 20l6-4v8z" fill="currentColor" /></svg>
        <svg width="7" height="4" viewBox="0 0 7 4" fill="currentColor"><path d="M0 0h7L3.500 4z" /></svg>
      </button>
      <span className="mt-[6px] h-px w-[34px] bg-[#666a6e]" />
      <button className="mt-1" aria-label="Show motion">
        <svg width="30" height="30" viewBox="0 0 30 30" fill="#5b606a" stroke="currentColor" strokeWidth="1.500"><path d="M1 1h8v8H1zM11 1h8v8h-8zM21 1h8v8h-8zM1 12h20v17H1z" /><path d="M7 16v9l8-4.500z" fill="currentColor" stroke="none" /></svg>
      </button>
      <button className="mt-[10px] mr-[2px] mb-[2px] self-end" aria-label="Navigation bar options">
        <svg width="10" height="10" viewBox="0 0 10 10" fill="none" stroke="currentColor"><circle cx="5" cy="5" r="4" /><path d="M2 4.500h6" /></svg>
      </button>
    </div>
  );
}

const history = ['XLINE', 'Specify a point or [Hor/Ver/Ang/Bisect/Offset]: h', 'Specify through point:', 'Specify through point:'];

function CommandLine() {
  return (
    <div className="absolute bottom-[2px] left-[409px] flex w-[1098px] font-['DejaVu_Sans_Mono',monospace] text-[15px]">
      <div className="flex w-[31px] flex-col items-start bg-[#2a303e] pt-[5px] pl-[5px]">
        <svg width="22" height="7" viewBox="0 0 22 7" stroke="#c8c8c8" strokeWidth="2" aria-hidden="true"><path d="M0 1h22M0 6h22" strokeDasharray="2 2" /></svg>
        <button className="mt-2 ml-[2px]" aria-label="Close command line"><svg width="12" height="12" viewBox="0 0 12 12" stroke="#c8c8c8" strokeWidth="2" aria-hidden="true"><path d="M1 1l10 10M11 1L1 11" /></svg></button>
        <button className="mt-[14px]" aria-label="Customize command line">
          <svg width="20" height="20" viewBox="0 0 20 20" fill="#c8c8c8" aria-hidden="true"><path d="M0 17L10 8Q9 3 13 1l3-1-2 4 2 2 4-2q0 6-4 7l-4 0-9 9H0z" /></svg>
        </button>
      </div>
      <div className="flex flex-1 flex-col gap-px">
        <div className="h-[84px] bg-[#e7e4e2]/60 pt-2 pl-[3px] leading-[19px] text-[#0c0e10]">
          {history.map((line, i) => (
            <p key={i}>{line}</p>
          ))}
        </div>
        <div className="flex h-[25px] items-center bg-white/70 px-1">
          <svg width="20" height="16" viewBox="0 0 20 16" fill="none" stroke="#5a5c5e" aria-hidden="true"><path d="M.5.5h19v15H.5z" /><path d="M0 0h20v4H0z" fill="#5a5c5e" stroke="none" /><path d="M2 6l3 2.500L2 11M6 11.500h5" /></svg>
          <svg width="10" height="5" viewBox="0 0 10 5" className="ml-[2px]" aria-hidden="true"><path d="M0 0h10L5 5z" fill="#505254" /></svg>
          <input aria-label="Command" placeholder="Type a command" className="ml-2 flex-1 bg-transparent italic outline-none placeholder:text-[#5e6062]" />
          <button aria-label="Show history"><svg width="9" height="5" viewBox="0 0 9 5" className="mr-[2px]" aria-hidden="true"><path d="M0 5h9L4.500 0z" fill="#505254" /></svg></button>
        </div>
      </div>
    </div>
  );
}

function Viewport() {
  return (
    <main className="relative min-h-0 flex-1 overflow-hidden bg-[#212830]">
      <Drawing />
      <div className="relative flex justify-between pt-1 pr-[14px] pl-[7px] text-[#e8e8e8]">
        <div className="flex gap-[2px]">
          <button>[−]</button><button>[Custom View]</button><button>[Wireframe]</button>
        </div>
        <div className="flex items-center gap-[10px] pt-1">
          <button className="flex h-[14px] w-[14px] items-end pb-[2px]" aria-label="Minimize drawing"><span className="h-1 w-full bg-[#f2f2f2]" /></button>
          <button aria-label="Restore drawing"><svg width="14" height="14" viewBox="0 0 14 14" fill="none" stroke="#f2f2f2" strokeWidth="2" aria-hidden="true"><path d="M4 3V1h9v9h-2" /><path d="M1.500 4.500h8v8h-8z" strokeWidth="3" /></svg></button>
          <button aria-label="Close drawing window"><svg width="14" height="13" viewBox="0 0 14 13" stroke="#f2f2f2" strokeWidth="3" aria-hidden="true"><path d="M2 1l10 11M12 1L2 12" /><path d="M0 1h5M9 1h5M0 12h5M9 12h5" strokeWidth="2" /></svg></button>
        </div>
      </div>
      <div className="absolute top-[71px] right-5 flex flex-col items-center gap-[15px]">
        <ViewCube />
        <button className="flex h-[21px] w-14 items-center justify-center gap-[7px] rounded border border-[#b0b2be] bg-[#9a9cab] text-[13px] text-[#6b6d78]">
          WCS<svg width="10" height="6" viewBox="0 0 10 6" fill="none" stroke="#c4c6d0" aria-hidden="true"><path d="M.5.500h9L5 5z" /></svg>
        </button>
      </div>
      <div className="absolute top-[250px] right-[5px]"><NavBar /></div>
      <CommandLine />
    </main>
  );
}

/* ---------- status bar ---------- */

function StatusGroup({ width, children }: { width: string; children?: ReactNode }) {
  return <div className={`flex h-[30px] items-center bg-[#3b4453] ${width}`}>{children}</div>;
}

function Person({ children }: { children?: ReactNode }) {
  return <Icon><path d="M9 0l3 8v4l6 8-9-5-9 5 6-8V8z" fill="#e8e8e8" stroke="none" />{children}</Icon>;
}

function StatusBar() {
  return (
    <footer className="mb-1 flex h-[30px] gap-[3px] pr-1 pl-[5px] text-[#e8e8e8]">
      <div className="mr-[2px] flex-1 bg-[#3b4453]" />
      <StatusGroup width="w-[59px] justify-center"><button>MODEL</button></StatusGroup>
      <StatusGroup width="w-[80px] gap-[10px] pl-[5px]">
        <button aria-label="Grid"><Icon><path d="M5.500 0v20M10.500 0v20M15.500 0v20M0 5.500h20M0 10.500h20M0 15.500h20" /></Icon></button>
        <button aria-label="Snap"><Icon><path d="M2 4h16M2 10h16M2 16h16" strokeWidth="3" strokeDasharray="3 4" /></Icon></button>
        <button aria-label="Snap options"><Caret big /></button>
      </StatusGroup>
      <div className="flex gap-px">
        <StatusGroup width="w-[130px] gap-[10px] pl-[5px]">
          <button aria-label="Ortho"><Icon><path d="M.5 0v19.500H20" strokeWidth="1.500" /><path d="M1 13.500h6v6" /></Icon></button>
          <button aria-label="Polar tracking"><Icon><circle cx="9" cy="11" r="7.500" /><path d="M9 11.500h11M9 11l8-9" /></Icon></button>
          <button aria-label="Polar options"><Caret big /></button>
          <button aria-label="Isodraft"><Icon><path d="M3 3l15 14" stroke="#e06a78" /><path d="M10.500 1v18" stroke="#5cc98a" /><path d="M9 8h3v4H9z" fill="#3b4453" /></Icon></button>
          <button aria-label="Isodraft options"><Caret big /></button>
        </StatusGroup>
        <StatusGroup width="w-[81px] gap-[2px] pl-px">
          <button className="flex h-7 w-7 items-center justify-center bg-[#6190c2]" aria-label="Object snap tracking"><Icon><path d="M0 18.500h20M3 16L16 3" /><path d="M6 10h4v4H6z" fill="#fff" stroke="none" /></Icon></button>
          <button className="flex h-7 w-7 items-center justify-center bg-[#6190c2]" aria-label="Object snap"><Icon><path d="M1.500 1.500h17v17h-17z" strokeWidth="1.500" /><path d="M.5.5h5v5h-5z" fill="#6190c2" stroke="#fff" /></Icon></button>
          <button className="ml-1" aria-label="Object snap options"><Caret big /></button>
        </StatusGroup>
      </div>
      <StatusGroup width="w-[132px] pl-px">
        <button className="flex h-7 w-7 items-center justify-center bg-[#6190c2]" aria-label="Annotation visibility"><Person><circle cx="16" cy="4" r="3" /></Person></button>
        <button className="ml-[5px]" aria-label="Auto scale"><Person><path d="M17 0l-3 5h4l-3 5" strokeWidth="1.500" /></Person></button>
        <button className="ml-[10px]" aria-label="Annotation scale"><Person /></button>
        <button className="ml-[10px] flex items-center gap-[2px]">1:1<Caret big /></button>
      </StatusGroup>
      <div className="flex gap-px">
        <StatusGroup width="w-[50px] gap-[9px] pl-[5px]">
          <button aria-label="Workspace"><Icon><circle cx="10" cy="10" r="8.500" strokeWidth="3" strokeDasharray="3.340 3.340" /><circle cx="10" cy="10" r="5.500" strokeWidth="4" /></Icon></button>
          <button aria-label="Workspace options"><Caret big /></button>
        </StatusGroup>
        <StatusGroup width="w-[30px] justify-center"><button aria-label="Annotation monitor"><Icon><path d="M10 0v20M0 10h20" strokeWidth="2.500" /></Icon></button></StatusGroup>
      </div>
      <StatusGroup width="w-[30px] justify-center"><button aria-label="Isolate objects"><Icon><path d="M.5.5h7v8h-7zM8 12l4.500 7.500h-9z" /><circle cx="15.500" cy="8.500" r="4" /></Icon></button></StatusGroup>
      <StatusGroup width="w-[3px]" />
      <StatusGroup width="w-[60px] justify-center gap-[10px]">
        <button aria-label="Clean screen"><Icon><path d="M.5 2.500h19v15H.5zM13 9l4-4M3 15l4-4" /><path d="M13 4h5v5zM2 11v5h5z" fill={W} stroke="none" /></Icon></button>
        <button aria-label="Customization"><Icon><path d="M0 2h20M0 10h20M0 18h20" strokeWidth="2.500" /></Icon></button>
      </StatusGroup>
    </footer>
  );
}

export default function App() {
  return (
    <div className="flex h-screen flex-col border-t border-l border-[#0a8fdc] bg-[#222933] font-['Open_Sans',sans-serif] text-[14px]">
      <TitleBar />
      <RibbonTabs />
      <Ribbon />
      <FileTabs />
      <div className="mr-[2px] ml-[3px] h-[5px] shrink-0 bg-[#3b4453]" />
      <Viewport />
      <div className="mr-[2px] ml-[3px] h-[5px] shrink-0 bg-[#3b4453]" />
      <LayoutTabs />
      <StatusBar />
    </div>
  );
}
